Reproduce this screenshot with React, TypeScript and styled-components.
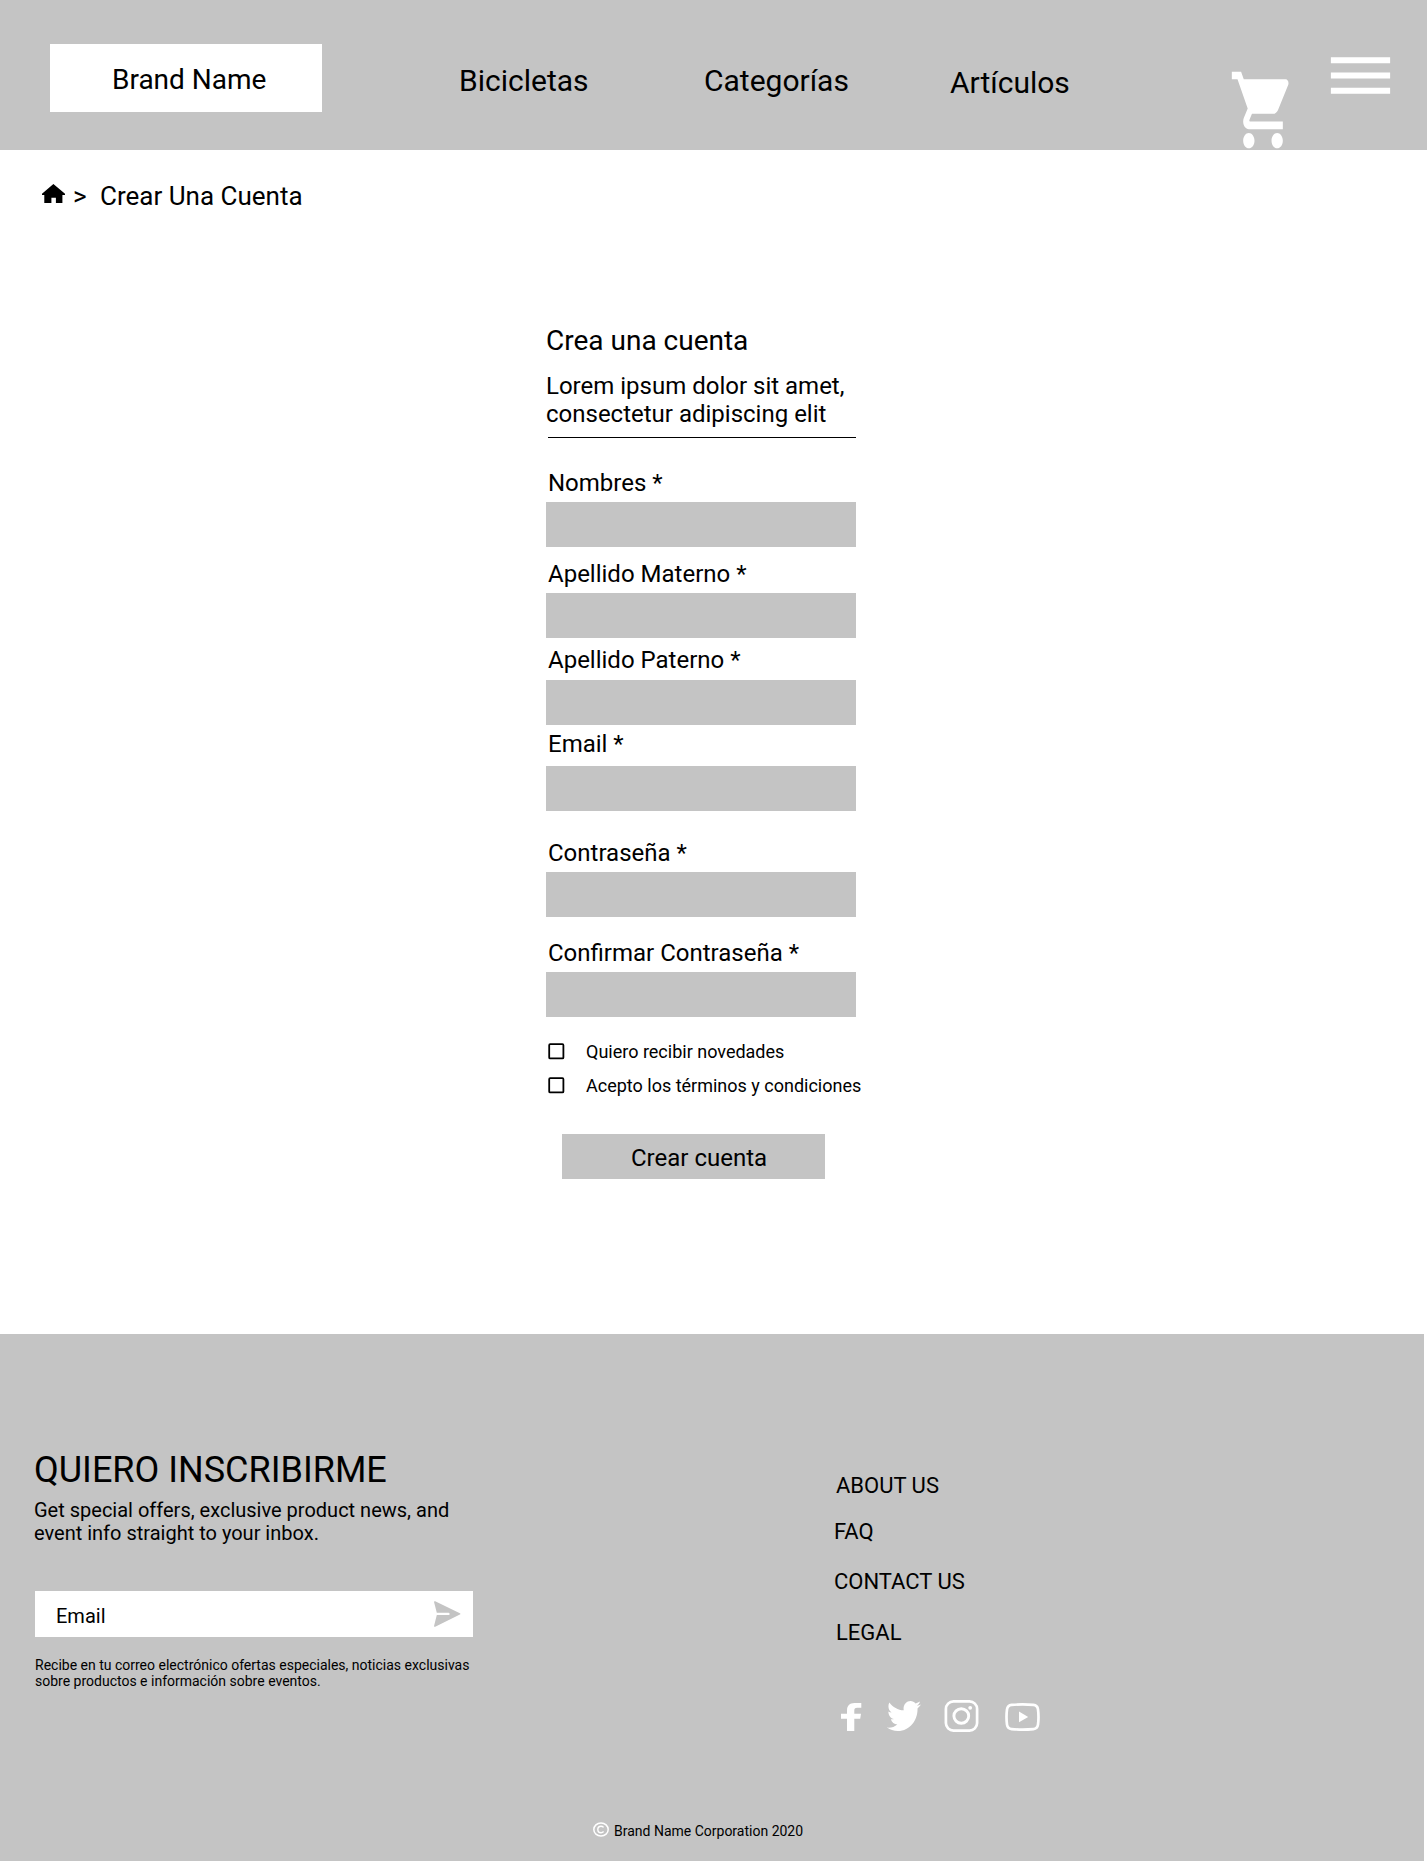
import React from "react";
import styled, { createGlobalStyle } from "styled-components";

const GRAY = "#c4c4c4";

const GlobalStyle = createGlobalStyle`
  *, *::before, *::after { box-sizing: border-box; }
  body {
    margin: 0;
    background: #fff;
    color: #000;
    font-family: Roboto, "Liberation Sans", sans-serif;
  }
  h1, h2, p { margin: 0; font-weight: 400; }
`;

const Page = styled.div`
  width: 1427px;
  height: 1861px;
  display: flex;
  flex-direction: column;
  overflow: hidden;
`;

/* ---------- header ---------- */

const Header = styled.header`
  flex: none;
  height: 150px;
  display: flex;
  align-items: flex-start;
  background: ${GRAY};
`;

const Brand = styled.div`
  flex: none;
  width: 272px;
  height: 68px;
  margin: 44px 0 0 50px;
  padding: 19px 0 0 62px;
  background: #fff;
  font-size: 28px;
  line-height: 33px;
  white-space: nowrap;
`;

const Nav = styled.nav`
  flex: none;
  margin-left: 137px;
  padding-top: 63px;
  display: grid;
  grid-template-columns: 245px 246px 279px;
  align-items: start;
`;

const NavLink = styled.a<{ $drop?: number }>`
  font-size: 30px;
  line-height: 35px;
  margin-top: ${(p) => p.$drop ?? 0}px;
  white-space: nowrap;
`;

const Actions = styled.div`
  flex: none;
  display: flex;
  align-items: flex-start;
  gap: 24px;
  padding-top: 39px;
`;

const HeaderIcon = styled.svg`
  display: block;
  flex: none;
  fill: #fff;
`;

const CartIcon = styled(HeaderIcon)`
  width: 68px;
  height: 92px;
  margin-top: 25px;
`;

const MenuIcon = styled(HeaderIcon)`
  width: 79px;
  height: 73px;
`;

/* ---------- breadcrumb ---------- */

const Breadcrumb = styled.nav`
  flex: none;
  display: flex;
  align-items: flex-start;
  padding: 31px 0 0 42px;
  height: 174px;
  font-size: 26px;
  line-height: 30px;
`;

const HomeIcon = styled.svg`
  display: block;
  width: 23px;
  height: 19px;
  margin-top: 3px;
`;

const Separator = styled.span`
  width: 27px;
  margin-left: 8px;
`;

/* ---------- form ---------- */

const Form = styled.form`
  flex: none;
  width: 310px;
  height: 1010px;
  margin-left: 546px;
  display: flex;
  flex-direction: column;
`;

const Title = styled.h1`
  font-size: 28px;
  line-height: 33px;
`;

const Intro = styled.p`
  margin-top: 15px;
  font-size: 24px;
  line-height: 28px;
  white-space: nowrap;
`;

const Rule = styled.div`
  height: 1px;
  margin: 9px 0 31px 2px;
  background: #000;
`;

const Field = styled.label<{ $gap: number; $after: number }>`
  display: flex;
  flex-direction: column;
  gap: ${(p) => p.$gap}px;
  margin-bottom: ${(p) => p.$after}px;
`;

const FieldName = styled.span`
  padding-left: 2px;
  font-size: 24px;
  line-height: 28px;
  white-space: nowrap;
`;

const Input = styled.input`
  width: 310px;
  height: 45px;
  border: 0;
  padding: 0 12px;
  outline: none;
  background: ${GRAY};
  font: 24px Roboto, sans-serif;
`;

const Checks = styled.div`
  display: flex;
  flex-direction: column;
  gap: 13px;
  margin-top: 24px;
`;

const Check = styled.label`
  height: 21px;
  display: flex;
  align-items: center;
  gap: 19px;
  font-size: 18px;
  line-height: 21px;
  white-space: nowrap;
`;

const CheckBox = styled.svg`
  flex: none;
  width: 21px;
  height: 21px;
`;

const Submit = styled.button`
  width: 263px;
  height: 45px;
  margin: 38px 0 0 16px;
  padding: 10px 0 7px 69px;
  border: 0;
  background: ${GRAY};
  color: #000;
  font: 24px Roboto, sans-serif;
  line-height: 28px;
  text-align: left;
`;

/* ---------- footer ---------- */

const Footer = styled.footer`
  flex: none;
  width: 1424px;
  height: 527px;
  display: flex;
  flex-direction: column;
  background: ${GRAY};
`;

const FooterColumns = styled.div`
  height: 489px;
  display: grid;
  grid-template-columns: 800px 1fr;
  padding-left: 34px;
`;

const Signup = styled.section`
  padding-top: 115px;
`;

const SignupTitle = styled.h2`
  font-size: 36px;
  line-height: 42px;
`;

const SignupText = styled.p`
  margin-top: 8px;
  font-size: 20px;
  line-height: 23px;
`;

const EmailBox = styled.div`
  width: 438px;
  height: 46px;
  margin: 46px 0 0 1px;
  padding: 10px 12px 0 21px;
  display: flex;
  justify-content: space-between;
  align-items: flex-start;
  background: #fff;
  font-size: 20px;
  line-height: 24px;
`;

const EmailLabel = styled.span`
  padding-top: 3px;
`;

const SendIcon = styled.svg`
  width: 27px;
  height: 26px;
  fill: ${GRAY};
`;

const SmallPrint = styled.p`
  margin: 20px 0 0 1px;
  font-size: 14px;
  line-height: 16px;
`;

const Links = styled.section`
  padding-top: 139px;
  display: flex;
  flex-direction: column;
`;

const FooterLink = styled.a<{ $indent?: number; $after: number }>`
  font-size: 22px;
  line-height: 25px;
  margin: 0 0 ${(p) => p.$after}px ${(p) => p.$indent ?? 0}px;
`;

const Socials = styled.div`
  display: flex;
  align-items: flex-start;
  padding-left: 7px;
`;

const SocialIcon = styled.svg<{ $left?: number; $top: number }>`
  display: block;
  margin: ${(p) => p.$top}px 0 0 ${(p) => p.$left ?? 0}px;
  fill: #fff;
`;

const Copyright = styled.div`
  display: flex;
  align-items: flex-start;
  gap: 5px;
  padding-left: 593px;
  font-size: 14px;
  line-height: 16px;
`;

const CopyrightIcon = styled.svg`
  width: 16px;
  height: 15px;
  margin-top: -1px;
  fill: none;
  stroke: #fff;
`;

const fields = [
  { name: "Nombres *", gap: 5, after: 13 },
  { name: "Apellido Materno *", gap: 5, after: 8 },
  { name: "Apellido Paterno *", gap: 6, after: 5 },
  { name: "Email *", gap: 8, after: 28 },
  { name: "Contraseña *", gap: 5, after: 22 },
  { name: "Confirmar Contraseña *", gap: 5, after: 0 },
];

const options = ["Quiero recibir novedades", "Acepto los términos y condiciones"];

export default function App() {
  return (
    <Page>
      <GlobalStyle />
      <Header>
        <Brand>Brand Name</Brand>
        <Nav>
          <NavLink>Bicicletas</NavLink>
          <NavLink>Categorías</NavLink>
          <NavLink $drop={2}>Artículos</NavLink>
        </Nav>
        <Actions>
          <CartIcon viewBox="0 0 24 24" preserveAspectRatio="none">
            <path d="M7 18c-1.1 0-1.99.9-1.99 2S5.9 22 7 22s2-.9 2-2-.9-2-2-2zM1 2v2h2l3.6 7.59-1.35 2.45c-.16.28-.25.61-.25.96 0 1.1.9 2 2 2h12v-2H7.42c-.14 0-.25-.11-.25-.25l.03-.12.9-1.63h7.45c.75 0 1.41-.41 1.75-1.03l3.58-6.49c.08-.14.12-.31.12-.48 0-.55-.45-1-1-1H5.21l-.94-2H1zm16 16c-1.1 0-1.99.9-1.99 2s.89 2 1.99 2 2-.9 2-2-.9-2-2-2z" />
          </CartIcon>
          <MenuIcon viewBox="0 0 24 24" preserveAspectRatio="none">
            <path d="M3 18h18v-2H3v2zm0-5h18v-2H3v2zm0-7v2h18V6H3z" />
          </MenuIcon>
        </Actions>
      </Header>

      <Breadcrumb>
        <HomeIcon viewBox="0 0 23 19">
          <path d="M11.4 0 23 9.7V11h-2.6v8h-6.5v-5.2H9.4V19H2.3v-8H0V9.7z" />
        </HomeIcon>
        <Separator>&gt;</Separator>
        <span>Crear Una Cuenta</span>
      </Breadcrumb>

      <Form onSubmit={(e) => e.preventDefault()}>
        <Title>Crea una cuenta</Title>
        <Intro>
          Lorem ipsum dolor sit amet,
          <br />
          consectetur adipiscing elit
        </Intro>
        <Rule />
        {fields.map((f) => (
          <Field key={f.name} $gap={f.gap} $after={f.after}>
            <FieldName>{f.name}</FieldName>
            <Input />
          </Field>
        ))}
        <Checks>
          {options.map((o) => (
            <Check key={o}>
              <CheckBox viewBox="0 0 21 21">
                <rect x="3.2" y="3.2" width="14.2" height="14.2" rx="1" fill="none" stroke="#000" strokeWidth="1.8" />
              </CheckBox>
              {o}
            </Check>
          ))}
        </Checks>
        <Submit>Crear cuenta</Submit>
      </Form>

      <Footer>
        <FooterColumns>
          <Signup>
            <SignupTitle>QUIERO INSCRIBIRME</SignupTitle>
            <SignupText>
              Get special offers, exclusive product news, and
              <br />
              event info straight to your inbox.
            </SignupText>
            <EmailBox>
              <EmailLabel>Email</EmailLabel>
              <SendIcon viewBox="0 0 27 26">
                <path d="M.1 1.3Q-.2-.1 1.2.3L25.9 12.2q1 .7 0 1.4L1.2 25.7Q-.2 26.1.1 24.7L2.8 14.1H14.4a1.2 1.2 0 0 0 0-2.4H2.8z" />
              </SendIcon>
            </EmailBox>
            <SmallPrint>
              Recibe en tu correo electrónico ofertas especiales, noticias exclusivas
              <br />
              sobre productos e información sobre eventos.
            </SmallPrint>
          </Signup>

          <Links>
            <FooterLink $indent={2} $after={21}>ABOUT US</FooterLink>
            <FooterLink $after={25}>FAQ</FooterLink>
            <FooterLink $after={26}>CONTACT US</FooterLink>
            <FooterLink $indent={2} $after={55}>LEGAL</FooterLink>
            <Socials>
              <SocialIcon $top={3} width="21" height="28" viewBox="0 0 21 28">
                <path d="M6 28V15.7H0v-5h6V7.5C6 2.7 8.7 0 13.5 0h6.8v4.8h-4.1c-2.2 0-2.9 1-2.9 2.6v3.3H20l-.8 5h-5.9V28z" />
              </SocialIcon>
              <SocialIcon $top={1} $left={25} width="34" height="30" viewBox="0 48 512 416" preserveAspectRatio="none">
                <path d="M459.37 151.716c.325 4.548.325 9.097.325 13.645 0 138.72-105.583 298.558-298.558 298.558-59.452 0-114.68-17.219-161.137-47.106 8.447.974 16.568 1.299 25.34 1.299 49.055 0 94.213-16.568 130.274-44.832-46.132-.975-84.792-31.188-98.112-72.772 6.498.974 12.995 1.624 19.818 1.624 9.421 0 18.843-1.3 27.614-3.573-48.081-9.747-84.143-51.98-84.143-102.985v-1.299c13.969 7.797 30.214 12.67 47.431 13.319-28.264-18.843-46.781-51.005-46.781-87.391 0-19.492 5.197-37.36 14.294-52.954 51.655 63.675 129.3 105.258 216.365 109.807-1.624-7.797-2.599-15.918-2.599-24.04 0-57.828 46.782-104.934 104.934-104.934 30.213 0 57.502 12.67 76.67 33.137 23.715-4.548 46.456-13.32 66.599-25.34-7.798 24.366-24.366 44.833-46.132 57.827 21.117-2.273 41.584-8.122 60.426-16.243-14.292 20.791-32.161 39.308-52.628 54.253z" />
              </SocialIcon>
              <SocialIcon $top={0} $left={23} width="35" height="32" viewBox="0 0 35 32">
                <rect x="1.9" y="1.4" width="31.2" height="29.2" rx="7.6" fill="none" stroke="#fff" strokeWidth="2.7" />
                <ellipse cx="17.3" cy="16" rx="7.4" ry="7.2" fill="none" stroke="#fff" strokeWidth="2.9" />
                <circle cx="26.2" cy="7.8" r="1.9" />
              </SocialIcon>
              <SocialIcon $top={3} $left={26} width="35" height="28" viewBox="0 0 35 28">
                <path
                  d="M6.6 1.9Q17.5.9 28.4 1.9 32.4 2.3 33 6.4 34 14 33 21.6 32.4 25.7 28.4 26.1 17.5 27.1 6.6 26.1 2.6 25.7 2 21.6 1 14 2 6.4 2.6 2.3 6.6 1.9z"
                  fill="none"
                  stroke="#fff"
                  strokeWidth="2.7"
                />
                <path d="M14 8.6v10.6l9.2-5.3z" />
              </SocialIcon>
            </Socials>
          </Links>
        </FooterColumns>

        <Copyright>
          <CopyrightIcon viewBox="0 0 16 15">
            <ellipse cx="8" cy="7.5" rx="7.2" ry="6.6" strokeWidth="1.5" />
            <path d="M10.6 5.4C9.9 4.6 9.1 4.2 8 4.2 6.1 4.2 4.8 5.5 4.8 7.5S6.1 10.7 8 10.7c1.1 0 1.9-.4 2.6-1.2" strokeWidth="1.4" />
          </CopyrightIcon>
          Brand Name Corporation 2020
        </Copyright>
      </Footer>
    </Page>
  );
}
